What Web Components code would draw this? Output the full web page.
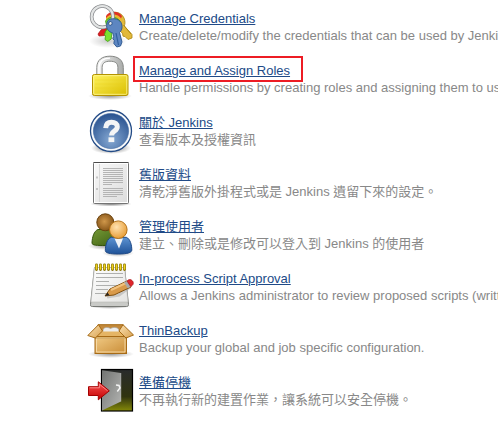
<!DOCTYPE html>
<html lang="zh-Hant">
<head>
<meta charset="utf-8">
<title>Jenkins</title>
<style>
html,body{margin:0;background:#fff}
body{width:498px;height:422px;overflow:hidden;font:13px/17px "Liberation Sans","Noto Sans CJK TC",sans-serif;color:#888}
</style>
</head>
<body>
<manage-list>
<manage-item icon="keys"><span slot="title">Manage Credentials</span>Create/delete/modify the credentials that can be used by Jenkins</manage-item>
<manage-item icon="lock" marked><span slot="title">Manage and Assign Roles</span>Handle permissions by creating roles and assigning them to users</manage-item>
<manage-item icon="help"><span slot="title">關於 Jenkins</span>查看版本及授權資訊</manage-item>
<manage-item icon="doc"><span slot="title">舊版資料</span>清乾淨舊版外掛程式或是 Jenkins 遺留下來的設定。</manage-item>
<manage-item icon="users"><span slot="title">管理使用者</span>建立、刪除或是修改可以登入到 Jenkins 的使用者</manage-item>
<manage-item icon="notepad"><span slot="title">In-process Script Approval</span>Allows a Jenkins administrator to review proposed scripts (written</manage-item>
<manage-item icon="box"><span slot="title">ThinBackup</span>Backup your global and job specific configuration.</manage-item>
<manage-item icon="exit"><span slot="title">準備停機</span>不再執行新的建置作業，讓系統可以安全停機。</manage-item>
</manage-list>
<script>
const grad=(id,a,b,dir='x1="0" y1="0" x2="1" y2="1"')=>`<linearGradient id="${id}" ${dir}><stop stop-color="${a}"/><stop offset="1" stop-color="${b}"/></linearGradient>`;
const V='x1="0" y1="0" x2="0" y2="1"';
const shadow=(cx,cy,rx,ry,o=.4)=>`<radialGradient id="sh"><stop stop-color="#000" stop-opacity="${o}"/><stop offset="1" stop-color="#000" stop-opacity="0"/></radialGradient><ellipse cx="${cx}" cy="${cy}" rx="${rx}" ry="${ry}" fill="url(#sh)"/>`;
const ICONS={
keys:`${shadow(21,38,19,7,.2)}
<path d="M20 22l-6 5-3 4 1 2 5.500-.5 8-6z" fill="#dc1c20" stroke="#a80f12" stroke-width=".7"/>
<path d="M19.500 14c3-6 14-7 17.500 1 1.600 4 1 6 .3 8l7.700 8.500v3.500l-4 1.500-3-3-2-.3-.5-3-4-3.500-11-6z" fill="#e2b93b" stroke="#a98511" stroke-width=".8"/>
<path d="M36.500 22l7.500 9" stroke="#b08b14" stroke-width="1"/>
<path d="M19 13c3-5.500 12-6 16 0l-3 8H19z" fill="#df3026"/>
<path d="M19 15c4-5 12-4.500 15.500 1l-2 8H19z" fill="#e9b62f"/>
<path d="M18.500 18c4-5.500 11-4.500 14.500 0l-3 9-5 2-.8 7-3.500 2.500-2.700-2 .5-3.500-1-1.500 1-3 2-3-1-3z" fill="#7bdf31" stroke="#3d9d14" stroke-width=".8"/>
<circle cx="15.300" cy="13.700" r="10.700" fill="none" stroke="#85878a" stroke-width="3.600"/>
<circle cx="15.300" cy="13.700" r="10.700" fill="none" stroke="#e2e4e4" stroke-width="2.200"/>
<path fill-rule="evenodd" d="M20.500 18c3-3.500 11-3 13.500 1.500 1.800 3.500 1.300 7.500-1.500 10L35 39l-1.500 4-3.700 1-3-3.500.5-3-1.500-2 .8-2-.8-3.500c-4.300-1-7-5-6-8.500.2-1.500.2-2.500.7-3.500zM23 18.500c-2 .4-2 4 .5 3.800 2.500-.3 2-4.300-.5-3.800z" fill="#5d86c1" stroke="#29558f" stroke-width=".9"/>
<path d="M29 30l2.500 12" stroke="#315f9e" stroke-width="1.200"/>`,
lock:`${grad('a','#fff35c','#d9bd00')}${grad('s','#f7f7f7','#a9aba9','x1="0" y1="0" x2="1" y2="0"')}${shadow(23,41,22,4)}
<path d="M9.800 20V12.500C9.800 5 15 1.200 23 1.200S36.300 5 36.300 12.500V20h-5.400v-7.500c0-4.500-3-6.300-7.900-6.300s-7.900 1.800-7.900 6.300V20z" fill="url(#s)" stroke="#858784"/>
<path d="M12 18v-6C12.500 6 16 3.200 23 3.200" fill="none" stroke="#fff" stroke-width="1.200"/>
<rect x="5.500" y="19.500" width="35.500" height="21" rx="1.800" fill="url(#a)" stroke="#b39300"/>
<rect x="6.700" y="20.700" width="33.100" height="18.600" rx="1" fill="none" stroke="#fff799" stroke-opacity=".8"/>
<path d="M8 25h30M8 29h30M8 33h30" stroke="#e7cf14" stroke-opacity=".3"/>`,
help:`<radialGradient id="b" cx=".5" cy=".75" r=".75"><stop stop-color="#85a8d2"/><stop offset="1" stop-color="#28518f"/></radialGradient>${shadow(24,41,20,6,.55)}
<circle cx="24" cy="24" r="20.500" fill="#f7f9fb" stroke="#234b86" stroke-width="1.300"/><circle cx="24" cy="24" r="17.600" fill="url(#b)" stroke="#3d659e" stroke-width=".6"/>
<path d="M18.700 21.200c.2-4 2.200-6 5.800-6 3.700 0 5.800 1.800 5.800 4.500 0 4.600-5.700 4.100-5.700 8.800" fill="none" stroke="#f4f5f6" stroke-width="5"/><rect x="21.500" y="30.300" width="5.800" height="4.800" fill="#f4f5f6"/>`,
doc:`${grad('p','#f9f9f9','#dcdcdc')}${shadow(24,45,21,2.500,.5)}
<rect x="6.500" y="3.500" width="35" height="41" rx="1" fill="url(#p)" stroke="#747474"/><path d="M6.500 3.500h35" stroke="#4c4c4c"/><rect x="7.500" y="4.500" width="33" height="39" fill="none" stroke="#fff"/>
<path d="M12.500 5v38" stroke="#d8d8d8"/><path d="M9 18.500h2M9 30h2" stroke="#c4c4c4" stroke-width="2"/>
<path d="M16 9.500h20M16 11.500h20M16 13.500h20M16 15.500h20M16 17.500h20M16 19.500h20M16 21.500h20M16 23.500h20M16 25.500h9M16 29.500h20M16 31.500h20M16 33.500h20M16 35.500h20M16 37.500h14" stroke="#b4b4b4"/>`,
users:`<radialGradient id="h" cx=".45" cy=".45" r=".6"><stop stop-color="#cf974a"/><stop offset="1" stop-color="#835216"/></radialGradient><radialGradient id="o" cx=".4" cy=".35" r=".7"><stop stop-color="#ffe2b0"/><stop offset="1" stop-color="#e69a31"/></radialGradient>${grad('g','#759936','#3c5e12')}${grad('b','#5c93d2','#1f5298',V)}${shadow(17,35,16,4,.35)}${shadow(31,42,16,4,.4)}
<path d="M5 32c.2-6 2-12 6-13.500h15c5 2 6 7 6 12 0 2.500-4 4-13 4C10 34.500 5 34.500 5 32z" fill="url(#g)" stroke="#34530c"/>
<circle cx="18.300" cy="11.300" r="8.500" fill="url(#h)" stroke="#6b430f"/>
<path d="M18.300 39.500c.2-6 2-12 6-13.200h15c4 1.500 5.500 8 5.500 12.700 0 2.500-4 4-13.500 4-8.500 0-13-1-13-3.500z" fill="url(#b)" stroke="#204a87"/>
<path d="M27.500 27.500h8.500l-4 10z" fill="#eef2f6"/>
<circle cx="31.300" cy="18.700" r="8.800" fill="url(#o)" stroke="#b47116"/>`,
notepad:`${grad('p','#fff','#e4e4e2')}${shadow(23,43,21,3,.5)}
<path d="M7.500 4.500h30l4 37c0 1.500-.8 2-2 2h-34c-1.700 0-2.200-.7-2-2z" fill="#c9cac7" stroke="#767874"/>
<path d="M7.500 4.500h30l3.500 34.500H4z" fill="url(#p)" stroke="#b8b9b7" stroke-width=".6"/>
<path d="M9 10.500h27M9 14.500h27M9 18.500h13M9 22.500h25M9 26.500h12M8 30.500h11" stroke="#a7a8a6" stroke-width=".9"/>
<path d="M9.500 2v4.500M13.500 2v4.500M17.500 2v4.500M21.500 2v4.500M25.500 2v4.500M29.500 2v4.500M33.500 2v4.500M37.500 2v4.500" stroke="#8a7300" stroke-width="2.900" stroke-linecap="round"/><path d="M9.500 2v4M13.500 2v4M17.500 2v4M21.500 2v4M25.500 2v4M29.500 2v4M33.500 2v4M37.500 2v4" stroke="#efd423" stroke-width="1.600" stroke-linecap="round"/>
<path d="M20 34l12-2 11-8" fill="none" stroke="#777" stroke-opacity=".3" stroke-width="3"/>
<path d="M18 33l5-7 17-8 4 6-17 8z" fill="#d99a4a" stroke="#82500e"/><path d="M24 27l16-7.500" stroke="#f2c27d" stroke-width="2"/><path d="M18 33l2.500-3.500 2 2.800z" fill="#222"/>
<path d="M37 19.500l4-1.900 3.700 5.700-4 2z" fill="#aaa"/><path d="M40 18c2-2 4.200-1.800 5.700.3 1.200 1.800.7 3.800-2 5.200z" fill="#e0252b" stroke="#a31116" stroke-width=".7"/>`,
box:`${grad('c','#f1cb86','#c98c36')}${grad('d','#fae1b3','#d9a250')}${shadow(24,39,23,4,.4)}
<path d="M11 9.700h25l4 12H8z" fill="#c48a3c" stroke="#a76b16"/>
<path d="M16 18v-2.500c0-3 4-4 7.500-2 3.500-2 8.500-1 8.500 2V18z" fill="#eeeeec" stroke="#a9a9a5" stroke-width=".7"/>
<path d="M14 16.500h20l6 5.500H8z" fill="#e5b565"/>
<rect x="8" y="21.500" width="31.500" height="17" fill="url(#c)" stroke="#a76b16"/><path d="M9.500 37V23H38v14z" fill="none" stroke="#f7dcab" stroke-width=".9"/>
<path d="M11.500 9.700L.8 20.500l7.500 2.500 7.200-7z" fill="url(#d)" stroke="#a76b16"/>
<path d="M36 9.700L46.500 20 39 23l-7-7z" fill="url(#d)" stroke="#a76b16"/><path d="M8 23h32" stroke="#8f5902" stroke-opacity=".45"/>`,
exit:`${grad('m','#727472','#b5b6b4')}${grad('r','#fa5555','#c40000',V)}
<linearGradient id="f" ${V}><stop stop-color="#292b2c"/><stop offset=".65" stop-color="#30330f"/><stop offset="1" stop-color="#858a08"/></linearGradient>
<rect x="14.500" y="2.500" width="31" height="41.500" fill="url(#f)" stroke="#000" stroke-width="1.200"/>
<path d="M15 3.200L34 6v28.500L15 43.500z" fill="url(#m)"/><path d="M34 6v28.500" stroke="#ccc" stroke-opacity=".5" stroke-width=".7"/>
<path d="M29 18l3 .5 1 2.500-2.700 3.500" fill="none" stroke="#f4f4f4" stroke-width="1.500"/>
<path d="M1.500 19.700h9.800v-4.900l11 9-11 9v-4.300H1.500z" fill="url(#r)" stroke="#a40000"/><path d="M2.600 20.800h9.800v-3.600l8.200 6.600" fill="none" stroke="#ff9a9a" stroke-width=".8"/>`
};
customElements.define('app-icon',class extends HTMLElement{
connectedCallback(){this.attachShadow({mode:'open'}).innerHTML=`<style>:host{display:block;width:48px;height:48px}svg{display:block;overflow:visible}</style><svg width="48" height="48" viewBox="0 0 48 48">${ICONS[this.getAttribute('name')]}</svg>`}
});
customElements.define('manage-item',class extends HTMLElement{
connectedCallback(){this.attachShadow({mode:'open'}).innerHTML=`<style>
:host{display:flex;height:52px;gap:4px;box-sizing:border-box;padding-top:3px;position:relative}
.text{padding-top:7px;white-space:nowrap}
a{display:block;width:max-content;height:17px;color:#204a87;text-decoration:underline;text-decoration-thickness:1px;text-underline-offset:1px}
.text div{height:17px}
:host([marked])::after{content:"";position:absolute;left:46px;top:4px;width:166px;height:22px;border:2px solid #ed1c24}
</style><app-icon name="${this.getAttribute('icon')}"></app-icon><div class="text"><a href="#"><slot name="title"></slot></a><div><slot></slot></div></div>`}
});
customElements.define('manage-list',class extends HTMLElement{
connectedCallback(){this.attachShadow({mode:'open'}).innerHTML=`<style>:host{display:grid;grid-auto-rows:52px;padding-left:87px}</style><slot></slot>`}
});
</script>
</body>
</html>
